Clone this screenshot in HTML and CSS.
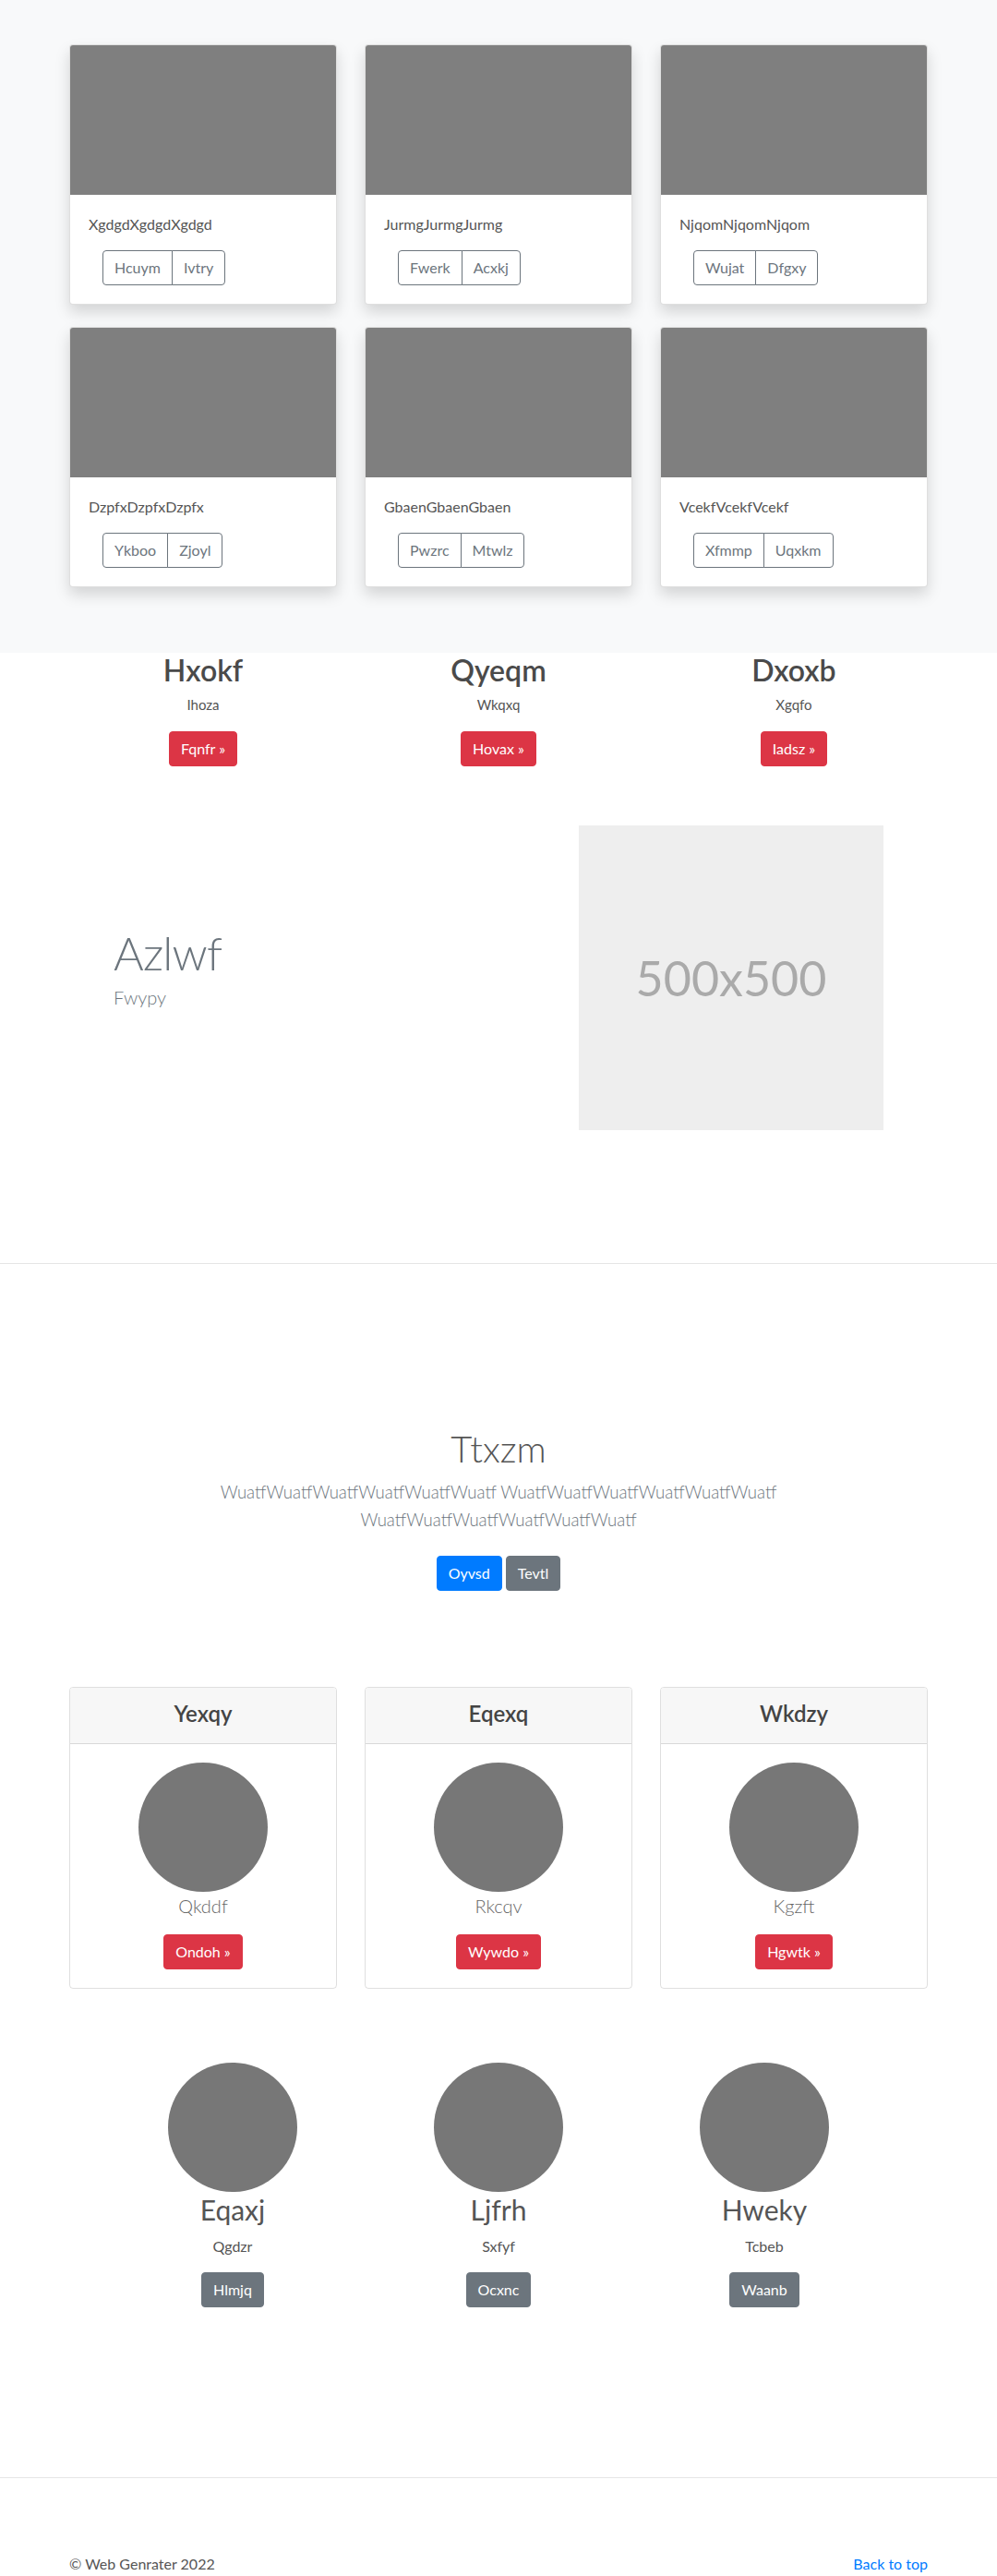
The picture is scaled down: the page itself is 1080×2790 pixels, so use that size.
FILE: index.html
```html
<!DOCTYPE html>
<html lang="en">
<head>
<meta charset="utf-8">
<title>Web Genrater</title>
<link rel="stylesheet" href="styles.css">
</head>
<body>
<section class="album">
  <div class="container grid3 album-grid">
    <div class="card shadow">
      <div class="card-img"></div>
      <div class="card-body">
        <p class="card-text">XgdgdXgdgdXgdgd</p>
        <div class="btn-group"><a class="btn btn-outline">Hcuym</a><a class="btn btn-outline">Ivtry</a></div>
      </div>
    </div>
    <div class="card shadow">
      <div class="card-img"></div>
      <div class="card-body">
        <p class="card-text">JurmgJurmgJurmg</p>
        <div class="btn-group"><a class="btn btn-outline">Fwerk</a><a class="btn btn-outline">Acxkj</a></div>
      </div>
    </div>
    <div class="card shadow">
      <div class="card-img"></div>
      <div class="card-body">
        <p class="card-text">NjqomNjqomNjqom</p>
        <div class="btn-group"><a class="btn btn-outline">Wujat</a><a class="btn btn-outline">Dfgxy</a></div>
      </div>
    </div>
    <div class="card shadow">
      <div class="card-img"></div>
      <div class="card-body">
        <p class="card-text">DzpfxDzpfxDzpfx</p>
        <div class="btn-group"><a class="btn btn-outline">Ykboo</a><a class="btn btn-outline">Zjoyl</a></div>
      </div>
    </div>
    <div class="card shadow">
      <div class="card-img"></div>
      <div class="card-body">
        <p class="card-text">GbaenGbaenGbaen</p>
        <div class="btn-group"><a class="btn btn-outline">Pwzrc</a><a class="btn btn-outline">Mtwlz</a></div>
      </div>
    </div>
    <div class="card shadow">
      <div class="card-img"></div>
      <div class="card-body">
        <p class="card-text">VcekfVcekfVcekf</p>
        <div class="btn-group"><a class="btn btn-outline">Xfmmp</a><a class="btn btn-outline">Uqxkm</a></div>
      </div>
    </div>
  </div>
</section>

<section class="container grid3 headings">
  <div class="heading-col">
    <h2 class="heading-title">Hxokf</h2>
    <p class="heading-sub">Ihoza</p>
    <p class="heading-action"><a class="btn btn-danger">Fqnfr &raquo;</a></p>
  </div>
  <div class="heading-col">
    <h2 class="heading-title">Qyeqm</h2>
    <p class="heading-sub">Wkqxq</p>
    <p class="heading-action"><a class="btn btn-danger">Hovax &raquo;</a></p>
  </div>
  <div class="heading-col">
    <h2 class="heading-title">Dxoxb</h2>
    <p class="heading-sub">Xgqfo</p>
    <p class="heading-action"><a class="btn btn-danger">Iadsz &raquo;</a></p>
  </div>
</section>

<section class="narrow featurette">
  <div class="feat-text">
    <h2 class="feat-heading">Azlwf</h2>
    <p class="lead muted">Fwypy</p>
  </div>
  <div class="feat-media">
    <div class="placeholder">500x500</div>
  </div>
</section>

<hr class="divider">

<section class="jumbotron">
  <h1 class="jumbo-heading">Ttxzm</h1>
  <p class="lead muted jumbo-lead">WuatfWuatfWuatfWuatfWuatfWuatf WuatfWuatfWuatfWuatfWuatfWuatf WuatfWuatfWuatfWuatfWuatfWuatf</p>
  <p class="jumbo-actions"><a class="btn btn-primary">Oyvsd</a> <a class="btn btn-secondary">Tevtl</a></p>
</section>

<section class="container grid3 pricing">
  <div class="pcard">
    <div class="pcard-header"><h4>Yexqy</h4></div>
    <div class="pcard-body">
      <div class="circle"></div>
      <p class="pcard-name">Qkddf</p>
      <a class="btn btn-danger">Ondoh &raquo;</a>
    </div>
  </div>
  <div class="pcard">
    <div class="pcard-header"><h4>Eqexq</h4></div>
    <div class="pcard-body">
      <div class="circle"></div>
      <p class="pcard-name">Rkcqv</p>
      <a class="btn btn-danger">Wywdo &raquo;</a>
    </div>
  </div>
  <div class="pcard">
    <div class="pcard-header"><h4>Wkdzy</h4></div>
    <div class="pcard-body">
      <div class="circle"></div>
      <p class="pcard-name">Kgzft</p>
      <a class="btn btn-danger">Hgwtk &raquo;</a>
    </div>
  </div>
</section>

<section class="narrow marketing">
  <div class="mk-col">
    <div class="circle"></div>
    <h2 class="mk-title">Eqaxj</h2>
    <p class="mk-sub">Qgdzr</p>
    <p class="mk-action"><a class="btn btn-secondary">Hlmjq</a></p>
  </div>
  <div class="mk-col">
    <div class="circle"></div>
    <h2 class="mk-title">Ljfrh</h2>
    <p class="mk-sub">Sxfyf</p>
    <p class="mk-action"><a class="btn btn-secondary">Ocxnc</a></p>
  </div>
  <div class="mk-col">
    <div class="circle"></div>
    <h2 class="mk-title">Hweky</h2>
    <p class="mk-sub">Tcbeb</p>
    <p class="mk-action"><a class="btn btn-secondary">Waanb</a></p>
  </div>
</section>

<hr class="divider">

<footer class="container footer">
  <p class="footer-copy">&copy; Web Genrater 2022</p>
  <a class="footer-link" href="#">Back to top</a>
</footer>
</body>
</html>
```

FILE: styles.css
```css
* { box-sizing: border-box; }

body {
  margin: 0;
  font-family: Lato, "Open Sans", sans-serif;
  font-size: 16px;
  line-height: 1.5;
  color: #555;
  background: #fff;
}

p { margin: 0; }
h1, h2, h4 { margin: 0; }

.container {
  width: 960px;
  margin: 0 auto;
  padding: 0 15px;
}

.grid3 {
  display: grid;
  grid-template-columns: repeat(3, 1fr);
  column-gap: 30px;
}

.narrow {
  width: 864px;
  margin: 0 auto;
}

/* Buttons */
.btn {
  display: inline-block;
  padding: 6px 12px;
  font-size: 16px;
  line-height: 24px;
  border: 1px solid transparent;
  border-radius: 4px;
  text-decoration: none;
  cursor: pointer;
  vertical-align: middle;
}
.btn-outline { color: #6c757d; border-color: #6c757d; background: #fff; }
.btn-danger { color: #fff; background: #dc3545; border-color: #dc3545; }
.btn-primary { color: #fff; background: #007bff; border-color: #007bff; }
.btn-secondary { color: #fff; background: #6c757d; border-color: #6c757d; }

.btn-group { display: inline-flex; margin-left: 15px; }
.btn-group .btn:first-child { border-top-right-radius: 0; border-bottom-right-radius: 0; }
.btn-group .btn:last-child { border-top-left-radius: 0; border-bottom-left-radius: 0; margin-left: -1px; }

/* Album */
.album {
  background: #f8f9fa;
  padding: 48px 0 71px;
}
.album-grid { row-gap: 24px; }

.card {
  background: #fff;
  border: 1px solid rgba(0, 0, 0, 0.125);
  border-radius: 4px;
  overflow: hidden;
}
.shadow { box-shadow: 0 8px 16px rgba(0, 0, 0, 0.15); }
.card-img { height: 162px; background: #7f7f7f; }
.card-body { padding: 20px; }
.card-text { margin-bottom: 16px; }

/* Headings row */
.headings { text-align: center; }
.heading-title {
  font-size: 32px;
  font-weight: 600;
  line-height: 1.2;
  color: #4a4a4a;
  margin-bottom: 8px;
}
.heading-sub { font-size: 15px; line-height: 21px; margin-bottom: 18px; }
.heading-action { margin-bottom: 16px; }

/* Featurette */
.featurette {
  display: flex;
  align-items: center;
  margin-top: 48px;
}
.feat-text { width: 504px; padding: 0 15px; }
.feat-media { width: 360px; padding: 0 15px; }
.feat-heading {
  font-size: 50px;
  font-weight: 300;
  line-height: 1;
  letter-spacing: -0.8px;
  color: #6c757d;
  margin-bottom: 8px;
}
.lead { font-size: 20px; font-weight: 300; line-height: 30px; }
.muted { color: #6c757d; }
.feat-text .lead { margin-bottom: 16px; }

.placeholder {
  width: 330px;
  height: 330px;
  background: #eee;
  color: #aaa;
  font-size: 52px;
  display: flex;
  align-items: center;
  justify-content: center;
}

.divider {
  margin: 144px 0 0;
  border: 0;
  border-top: 1px solid rgba(0, 0, 0, 0.1);
  height: 0;
}

/* Jumbotron */
.jumbotron {
  text-align: center;
  padding: 176px 0 96px;
}
.jumbo-heading {
  font-size: 40px;
  font-weight: 300;
  line-height: 1.2;
  margin-bottom: 8px;
}
.jumbo-lead { font-size: 18.6px; max-width: 700px; margin: 0 auto 16px; }
.jumbo-actions .btn { margin: 8px 0; }

/* Pricing */
.pcard {
  border: 1px solid rgba(0, 0, 0, 0.125);
  border-radius: 4px;
  text-align: center;
  overflow: hidden;
}
.pcard-header {
  background: #f7f7f7;
  border-bottom: 1px solid rgba(0, 0, 0, 0.125);
  padding: 10px 20px 14px;
}
.pcard-header h4 {
  font-size: 24px;
  font-weight: 600;
  line-height: 36px;
  color: #444;
}
.pcard-body { padding: 20px; }
.circle {
  width: 140px;
  height: 140px;
  border-radius: 50%;
  background: #777;
  margin: 0 auto;
}
.pcard-name {
  font-size: 20px;
  font-weight: 300;
  line-height: 30px;
  color: #666;
  margin-bottom: 16px;
}

/* Marketing */
.marketing {
  display: grid;
  grid-template-columns: repeat(3, 1fr);
  margin-top: 80px;
  text-align: center;
}
.mk-col { margin-bottom: 24px; }
.mk-title {
  font-size: 30px;
  font-weight: 400;
  line-height: 36px;
  margin: 1px 0 10px;
}
.mk-sub { margin: 0 12px 16px; }
.mk-action { margin-bottom: 16px; }

/* Footer */
.footer {
  display: flex;
  justify-content: space-between;
  padding-top: 81px;
  padding-bottom: 48px;
}
.footer-copy { color: #555; }
.footer-link { color: #007bff; text-decoration: none; }
```
